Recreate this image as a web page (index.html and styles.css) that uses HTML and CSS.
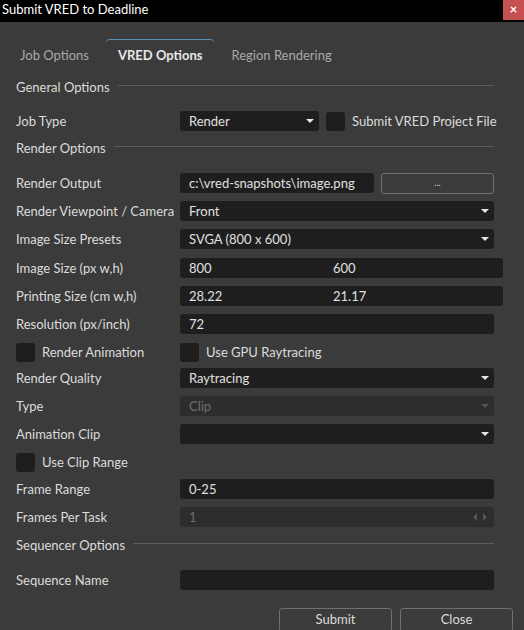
FILE: index.html
```html
<!DOCTYPE html>
<html>
<head>
<meta charset="utf-8">
<link rel="stylesheet" href="styles.css">
</head>
<body>
<div class="window">
  <div class="titlebar">
    <span class="title">Submit VRED to Deadline</span>
    <span class="close">×</span>
  </div>
  <div class="tabs">
    <span class="tab">Job Options</span>
    <span class="tab active">VRED Options</span>
    <span class="tab">Region Rendering</span>
  </div>
  <div class="content">
    <div class="group g-general"><span>General Options</span><i></i></div>
    <div class="row r-jobtype">
      <label>Job Type</label>
      <div class="fieldwrap">
        <div class="combo w-job"><span>Render</span><b class="arrow"></b></div>
        <div class="check"></div>
        <span class="checklabel">Submit VRED Project File</span>
      </div>
    </div>
    <div class="group g-render"><span>Render Options</span><i></i></div>
    <div class="rows">
      <div class="row">
        <label>Render Output</label>
        <div class="fieldwrap">
          <div class="edit w-out"><span>c:\vred-snapshots\image.png</span></div>
          <div class="btn browse">...</div>
        </div>
      </div>
      <div class="row">
        <label>Render Viewpoint / Camera</label>
        <div class="combo"><span>Front</span><b class="arrow"></b></div>
      </div>
      <div class="row">
        <label>Image Size Presets</label>
        <div class="combo"><span>SVGA (800 x 600)</span><b class="arrow"></b></div>
      </div>
      <div class="row t1">
        <label>Image Size (px w,h)</label>
        <div class="edit pair"><span class="half">800</span><span class="half">600</span></div>
      </div>
      <div class="row">
        <label>Printing Size (cm w,h)</label>
        <div class="edit pair"><span class="half">28.22</span><span class="half">21.17</span></div>
      </div>
      <div class="row">
        <label>Resolution (px/inch)</label>
        <div class="edit"><span>72</span></div>
      </div>
      <div class="row">
        <div class="checkrow"><div class="check"></div><span class="checklabel">Render Animation</span></div>
        <div class="checkrow"><div class="check"></div><span class="checklabel">Use GPU Raytracing</span></div>
      </div>
      <div class="row tm2">
        <label>Render Quality</label>
        <div class="combo"><span>Raytracing</span><b class="arrow"></b></div>
      </div>
      <div class="row">
        <label>Type</label>
        <div class="combo disabled"><span>Clip</span><b class="arrow"></b></div>
      </div>
      <div class="row">
        <label>Animation Clip</label>
        <div class="combo"><span></span><b class="arrow"></b></div>
      </div>
      <div class="row">
        <div class="checkrow"><div class="check"></div><span class="checklabel">Use Clip Range</span></div>
      </div>
      <div class="row tm1">
        <label>Frame Range</label>
        <div class="edit"><span>0-25</span></div>
      </div>
      <div class="row">
        <label>Frames Per Task</label>
        <div class="edit disabled spin"><span>1</span><b class="larr"></b><b class="rarr"></b></div>
      </div>
    </div>
    <div class="group g-seq"><span>Sequencer Options</span><i></i></div>
    <div class="row r-seq">
      <label>Sequence Name</label>
      <div class="edit"><span></span></div>
    </div>
    <div class="buttons">
      <div class="btn action">Submit</div>
      <div class="btn action">Close</div>
    </div>
  </div>
</div>
</body>
</html>
```
FILE: styles.css
```css
html, body {
  margin: 0;
  padding: 0;
  background: #3b3b3b;
  overflow: hidden;
}
body {
  font-family: Lato, "Open Sans", sans-serif;
  font-size: 13px;
  color: #dcdcdc;
}
.window {
  width: 524px;
  height: 630px;
  background: #3b3b3b;
  overflow: hidden;
}
.titlebar {
  height: 22px;
  background: #000;
  display: flex;
  align-items: flex-start;
  justify-content: space-between;
}
.title {
  color: #fff;
  font-size: 13px;
  line-height: 18px;
  padding-left: 2px;
}
.close {
  width: 21px;
  height: 20px;
  background: #c75050;
  color: #fff;
  font-weight: bold;
  font-size: 13px;
  line-height: 19px;
  text-align: center;
}
.tabs {
  margin-top: 17px;
  height: 31px;
  display: flex;
  padding-left: 20px;
}
.tab {
  color: #a9a9a9;
  font-size: 13px;
  line-height: 30px;
  padding-top: 1px;
  margin-right: 29px;
}
.tab.active {
  color: #e8e8e8;
  font-weight: bold;
  border-top: 1px solid #5b8fb5;
  border-radius: 4px 4px 0 0;
  padding: 0 12px;
  margin-left: -12px;
  margin-right: 17px;
}
.content {
  padding: 0 30px 0 16px;
  display: flex;
  flex-direction: column;
}
.group {
  display: flex;
  align-items: center;
  height: 20px;
  font-size: 13px;
}
.group i {
  flex: 1;
  height: 1px;
  background: #5c5c5c;
  margin-left: 8px;
  margin-top: -3px;
}
.g-general { margin-top: 7px; }
.r-jobtype { margin-top: 14px; }
.g-render { margin-top: 7px; }
.rows {
  margin-top: 15px;
  display: flex;
  flex-direction: column;
  gap: 8px;
}
.row {
  display: flex;
  align-items: center;
  height: 20px;
}
.row.t1 { margin-top: 1px; }
.row.tm2 { margin-top: -2px; }
.row.tm1 { margin-top: -1px; }
.row label {
  width: 164px;
  flex: none;
  font-size: 13px;
  white-space: nowrap;
}
.fieldwrap {
  display: flex;
  align-items: center;
  flex: 1;
}
.combo, .edit {
  flex: 1;
  height: 20px;
  background: #1e1e1e;
  border-radius: 3px;
  display: flex;
  align-items: center;
  padding-left: 9px;
  position: relative;
  font-size: 13px;
  color: #e0e0e0;
  box-sizing: border-box;
}
.combo span, .edit span {
  flex: 1;
}
.arrow {
  width: 0;
  height: 0;
  border-left: 4px solid transparent;
  border-right: 4px solid transparent;
  border-top: 4px solid #e6e6e6;
  margin-right: 5px;
}
.combo.disabled, .edit.disabled {
  background: #2d2d2d;
  color: #6e6e6e;
}
.combo.disabled .arrow {
  border-top-color: #555;
}
.w-job {
  flex: none;
  width: 139px;
}
.check {
  width: 19px;
  height: 19px;
  background: #1e1e1e;
  border-radius: 3px;
  flex: none;
}
.fieldwrap .check {
  margin-left: 7px;
}
.checklabel {
  margin-left: 7px;
  font-size: 13px;
  white-space: nowrap;
}
.checkrow {
  display: flex;
  align-items: center;
  width: 164px;
}
.w-out {
  flex: none;
  width: 194px;
}
.btn {
  border: 1px solid #6f6f6f;
  border-radius: 3px;
  background: #3b3b3b;
  color: #dcdcdc;
  text-align: center;
  box-sizing: border-box;
}
.browse {
  margin-left: 7px;
  flex: 1;
  height: 21px;
  font-size: 9px;
  line-height: 17px;
}
.pair {
  flex: none;
  width: 323px;
  margin-right: -9px;
}
.pair .half {
  flex: none;
  width: 144px;
}
.spin .larr, .spin .rarr {
  width: 0;
  height: 0;
  border-top: 4px solid transparent;
  border-bottom: 4px solid transparent;
}
.spin .larr {
  border-right: 4px solid #555;
  margin-right: 6px;
}
.spin .rarr {
  border-left: 4px solid #555;
  margin-right: 7px;
}
.g-seq { margin-top: 8px; }
.r-seq { margin-top: 15px; }
.buttons {
  margin-top: 18px;
  display: flex;
  justify-content: flex-end;
  gap: 8px;
  margin-right: -19px;
}
.btn.action {
  width: 113px;
  height: 24px;
  font-size: 13px;
  line-height: 21px;
}
```
